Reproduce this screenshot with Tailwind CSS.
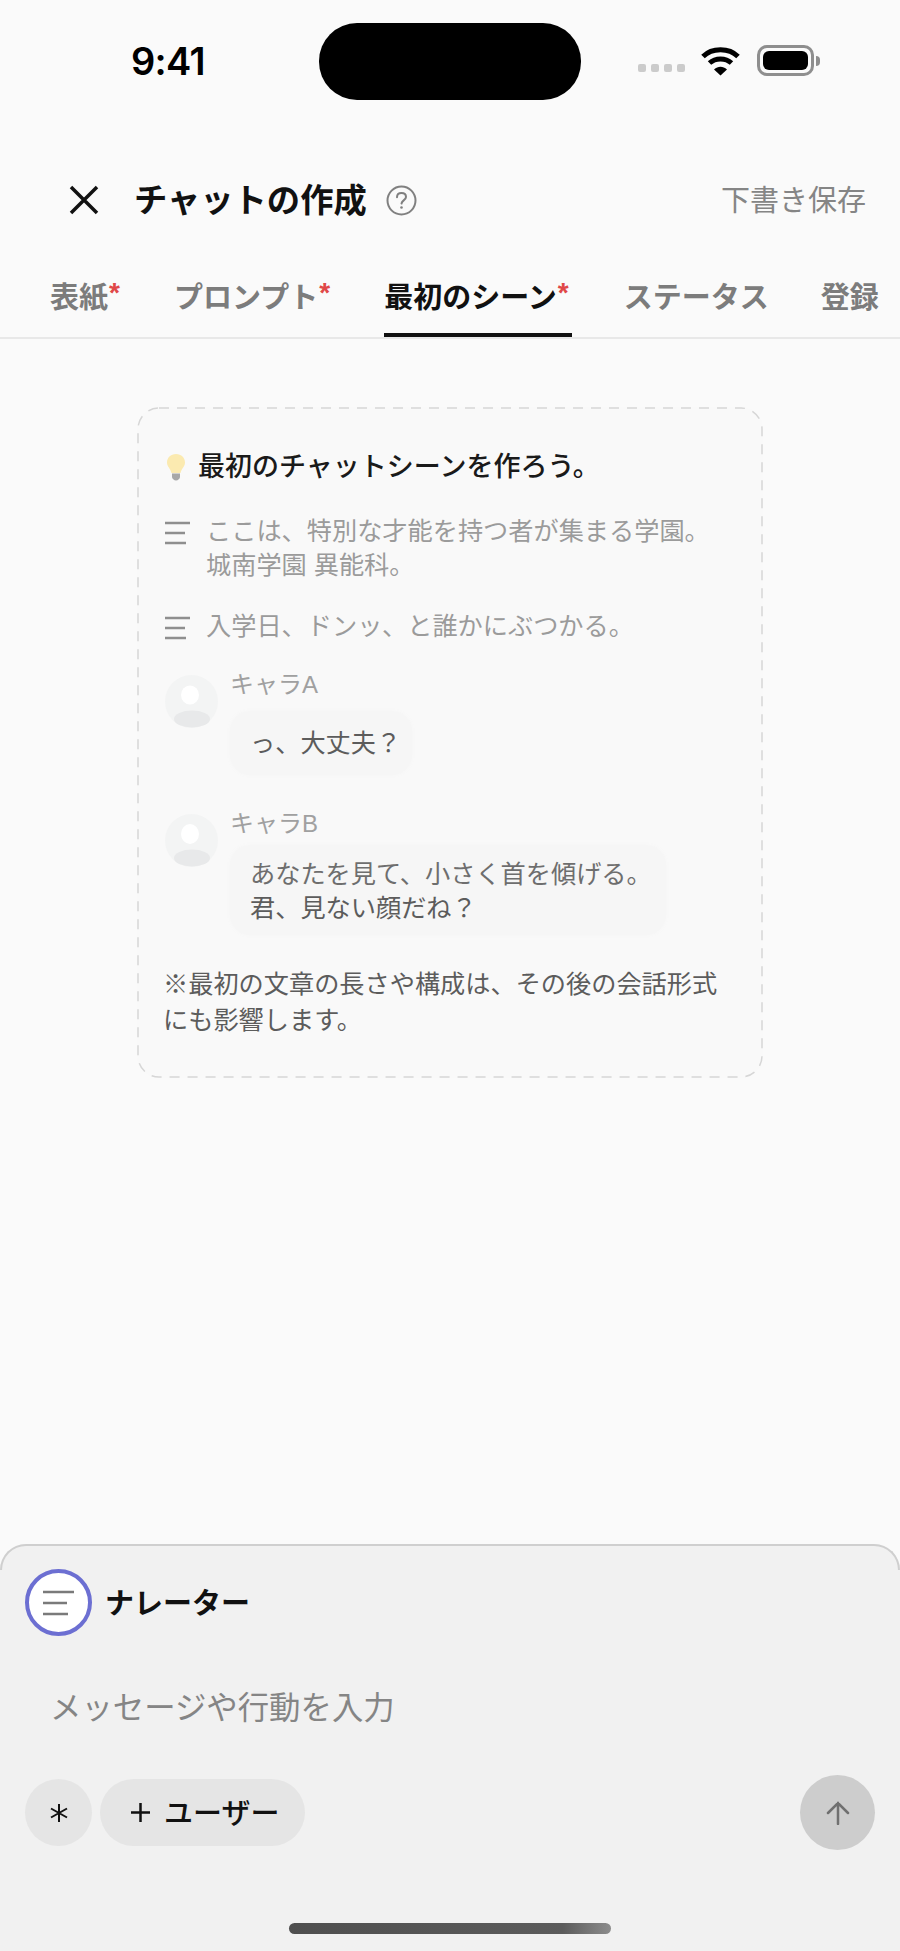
<!DOCTYPE html>
<html lang="ja">
<head>
<meta charset="utf-8">
<script src="https://cdn.jsdelivr.net/npm/@tailwindcss/browser@4"></script>
</head>
<body class="m-0">
<div class="w-[900px] h-[1951px] overflow-hidden flex flex-col bg-[#fafafa] font-['Liberation_Sans','Noto_Sans_CJK_JP',sans-serif]">

  <!-- status bar -->
  <div class="flex items-center pt-[23px] h-[100px] shrink-0">
    <div class="w-[319px] pl-[131px] mt-[-2px] text-[38px] leading-[44px] font-semibold text-black font-['Inter',sans-serif] tracking-[-0.7px]">9:41</div>
    <div class="w-[262px] h-[77px] rounded-[38px] bg-black shrink-0"></div>
    <div class="w-[319px] pl-[57px] flex items-center">
      <div class="flex gap-[5px] mt-[12px]">
        <span class="w-[8px] h-[8px] rounded-[2px] bg-[#cbcbcb]"></span>
        <span class="w-[8px] h-[8px] rounded-[2px] bg-[#cbcbcb]"></span>
        <span class="w-[8px] h-[8px] rounded-[2px] bg-[#cbcbcb]"></span>
        <span class="w-[8px] h-[8px] rounded-[2px] bg-[#cbcbcb]"></span>
      </div>
      <svg class="ml-[15px] mt-[-2px]" width="41" height="30" viewBox="0 0 41 30" fill="none">
        <path d="M3 10.5C12 1.5 29 1.5 38 10.5" stroke="#000" stroke-width="5"/>
        <path d="M9.5 17C15.5 11.5 25.5 11.5 31.5 17" stroke="#000" stroke-width="5"/>
        <path d="M14 23.5L20.5 29.5L27 23.5C23 19.8 18 19.8 14 23.5Z" fill="#000"/>
      </svg>
      <div class="ml-[16px] mt-[-2px] w-[57px] h-[31px] rounded-[10px] border-[3px] border-[#8e8e8e] p-[3px] shrink-0">
        <div class="w-full h-full rounded-[6px] bg-black"></div>
      </div>
      <div class="w-[4px] h-[10px] rounded-r-[4px] bg-[#8e8e8e] ml-[2px] mt-[-2px]"></div>
    </div>
  </div>

  <!-- header -->
  <div class="flex items-center h-[56px] mt-[72px] shrink-0 pl-[69px] pr-[34px]">
    <svg width="30" height="30" viewBox="0 0 30 30" fill="none" class="shrink-0">
      <path d="M2 2L28 28M28 2L2 28" stroke="#111" stroke-width="3.5"/>
    </svg>
    <div class="ml-[35px] mt-[2px] text-[33.3px] leading-[44px] font-bold text-[#111] whitespace-nowrap">チャットの作成</div>
    <svg width="31" height="31" viewBox="0 0 31 31" fill="none" class="ml-[19px] shrink-0">
      <circle cx="15.5" cy="15.5" r="14" stroke="#808080" stroke-width="2"/>
      <path d="M11 12.2C11 9.5 13 8 15.5 8C18 8 20 9.5 20 12C20 15 16 15.2 15.5 18.5" stroke="#808080" stroke-width="2" stroke-linecap="round"/>
      <circle cx="15.5" cy="22.5" r="1.3" fill="#808080"/>
    </svg>
    <div class="ml-auto mt-[2px] text-[29px] leading-[40px] text-[#858585] whitespace-nowrap">下書き保存</div>
  </div>

  <!-- tabs -->
  <div class="flex mt-[44px] pl-[50px] gap-[52px] border-b-2 border-[#e8e8e8] shrink-0 h-[67px] text-[29px] leading-[52px] font-semibold text-[#7c7c7c] whitespace-nowrap">
    <div class="h-[65px]">表紙<span class="inline-block w-[14px] pl-[1px] text-[#e04848] text-[28px] leading-none align-[6px]">*</span></div>
    <div class="h-[65px]">プロンプト<span class="inline-block w-[14px] pl-[1px] text-[#e04848] text-[28px] leading-none align-[6px]">*</span></div>
    <div class="h-[65px] border-b-4 border-[#111] text-[#111]">最初のシーン<span class="inline-block w-[15px] pl-[1px] text-[#e04848] text-[28px] leading-none align-[6px]">*</span></div>
    <div class="h-[65px]">ステータス</div>
    <div class="h-[65px]">登録</div>
  </div>

  <!-- main -->
  <div class="flex-1 min-h-0">
    <div class="relative w-[626px] h-[671px] mx-auto mt-[68px] px-[28px] pt-[42px] bg-[#f9f9f9] rounded-[22px]">
      <svg class="absolute inset-0" width="626" height="671" viewBox="0 0 626 671" fill="none">
        <rect x="1" y="1" width="624" height="669" rx="21" stroke="#d6d6d6" stroke-width="1.5" stroke-dasharray="10 8"/>
      </svg>

      <div class="relative flex items-center h-[36px]">
        <svg width="22" height="28" viewBox="0 0 22 28" fill="none" class="shrink-0">
          <path d="M11 1C5.5 1 2 5 2 9.5C2 13.5 5.5 15.5 6.5 20H15.5C16.5 15.5 20 13.5 20 9.5C20 5 16.5 1 11 1Z" fill="#fbeab0"/>
          <path d="M7 20.5H15V24C15 25.5 13 27.5 11 27.5C9 27.5 7 25.5 7 24Z" fill="#a8a8a8"/>
        </svg>
        <div class="ml-[11px] text-[27px] leading-[36px] font-medium text-[#1a1a1a] whitespace-nowrap">最初のチャットシーンを作ろう。</div>
      </div>

      <div class="relative flex mt-[29px] text-[25.2px] leading-[34px] text-[#9b9b9b]">
        <svg width="25" height="24" viewBox="0 0 25 24" fill="none" class="shrink-0 mt-[7px]">
          <path d="M0 2H25M0 12H20M0 22H21" stroke="#8f8f8f" stroke-width="2.5"/>
        </svg>
        <div class="ml-[16px]">ここは、特別な才能を持つ者が集まる学園。<br>城南学園 異能科。</div>
      </div>

      <div class="relative flex mt-[27px] text-[25.2px] leading-[34px] text-[#9b9b9b]">
        <svg width="25" height="24" viewBox="0 0 25 24" fill="none" class="shrink-0 mt-[7px]">
          <path d="M0 2H25M0 12H20M0 22H21" stroke="#8f8f8f" stroke-width="2.5"/>
        </svg>
        <div class="ml-[16px]">入学日、ドンッ、と誰かにぶつかる。</div>
      </div>

      <div class="relative flex mt-[25px]">
        <svg width="53" height="53" viewBox="0 0 53 53" fill="none" class="shrink-0 mt-[7px]">
          <circle cx="26.5" cy="26.5" r="26.5" fill="#f3f4f4"/>
          <ellipse cx="25" cy="20" rx="9" ry="9.5" fill="#ffffff"/>
          <ellipse cx="27" cy="44" rx="18" ry="8.5" fill="#e8e9ea"/>
        </svg>
        <div class="ml-[12px]">
          <div class="text-[24px] leading-[34px] text-[#a0a0a0]">キャラA</div>
          <div class="mt-[9px] w-fit pl-[20px] pr-[11px] py-[15px] rounded-[20px] bg-[#f6f6f6] shadow-[0_0_4px_#f6f6f6] text-[25.2px] leading-[34px] text-[#5c5c5c]">っ、大丈夫？</div>
        </div>
      </div>

      <div class="relative flex mt-[32px]">
        <svg width="53" height="53" viewBox="0 0 53 53" fill="none" class="shrink-0 mt-[7px]">
          <circle cx="26.5" cy="26.5" r="26.5" fill="#f3f4f4"/>
          <ellipse cx="25" cy="20" rx="9" ry="10" fill="#ffffff"/>
          <ellipse cx="27" cy="44" rx="18" ry="8.5" fill="#e8e9ea"/>
        </svg>
        <div class="ml-[12px]">
          <div class="text-[24px] leading-[34px] text-[#a0a0a0]">キャラB</div>
          <div class="mt-[4px] w-fit pl-[20px] pr-[14px] pt-[12px] pb-[10px] rounded-[20px] bg-[#f6f6f6] shadow-[0_0_4px_#f6f6f6] text-[25.2px] leading-[34px] text-[#6e6e6e]">あなたを見て、小さく首を傾げる。<br><span class="text-[#5c5c5c]">君、見ない顔だね？</span></div>
        </div>
      </div>

      <div class="relative mt-[31px] -ml-[2px] text-[25.2px] leading-[36px] text-[#5c5c5c] whitespace-nowrap">※最初の文章の長さや構成は、その後の会話形式<br>にも影響します。</div>
    </div>
  </div>

  <!-- composer -->
  <div class="relative h-[407px] shrink-0 rounded-t-[26px] bg-[#f1f1f1] px-[25px] pt-[25px]">
    <div class="absolute top-0 left-0 right-0 h-[26px] rounded-t-[26px] border-t-2 border-x-2 border-[#cfcfcf] border-b-0"></div>
    <div class="flex items-center">
      <div class="w-[67px] h-[67px] rounded-full border-4 border-[#6c6fd2] bg-white flex items-center justify-center shrink-0">
        <svg width="32" height="26" viewBox="0 0 32 26" fill="none">
          <path d="M0 2H31M0 13H24M0 24H25" stroke="#7a7a7a" stroke-width="2.5"/>
        </svg>
      </div>
      <div class="ml-[13px] mt-[3px] text-[29px] leading-[40px] font-bold text-[#111] whitespace-nowrap">ナレーター</div>
    </div>
    <div class="mt-[51px] pl-[25px] text-[31.4px] leading-[44px] text-[#858585] whitespace-nowrap">メッセージや行動を入力</div>
    <div class="mt-[44px] flex items-center h-[75px]">
      <div class="w-[67px] h-[67px] rounded-full bg-[#e5e5e5] flex items-center justify-center shrink-0">
        <svg width="20" height="20" viewBox="0 0 20 20" fill="none">
          <path d="M10 1V19M2 5.5L18 14.5M18 5.5L2 14.5" stroke="#111" stroke-width="2"/>
        </svg>
      </div>
      <div class="ml-[8px] w-[205px] h-[67px] rounded-full bg-[#e5e5e5] flex items-center pl-[31px] shrink-0">
        <svg width="19" height="19" viewBox="0 0 19 19" fill="none" class="shrink-0">
          <path d="M9.5 0V19M0 9.5H19" stroke="#111" stroke-width="2.5"/>
        </svg>
        <div class="ml-[14px] mt-[3px] text-[29px] leading-[40px] font-medium text-[#111] whitespace-nowrap">ユーザー</div>
      </div>
      <div class="ml-auto w-[75px] h-[75px] rounded-full bg-[#cdcdcd] flex items-center justify-center shrink-0">
        <svg width="24" height="24" viewBox="0 0 24 24" fill="none">
          <path d="M12 23V2M2 12L12 2L22 12" stroke="#707070" stroke-width="2.5" stroke-linecap="round"/>
        </svg>
      </div>
    </div>
    <div class="mt-[73px] mx-auto w-[322px] h-[11px] rounded-full bg-[linear-gradient(90deg,#4f4f4f,#5c5c5c_85%,#8c8c8c)]"></div>
  </div>
</div>
</body>
</html>
